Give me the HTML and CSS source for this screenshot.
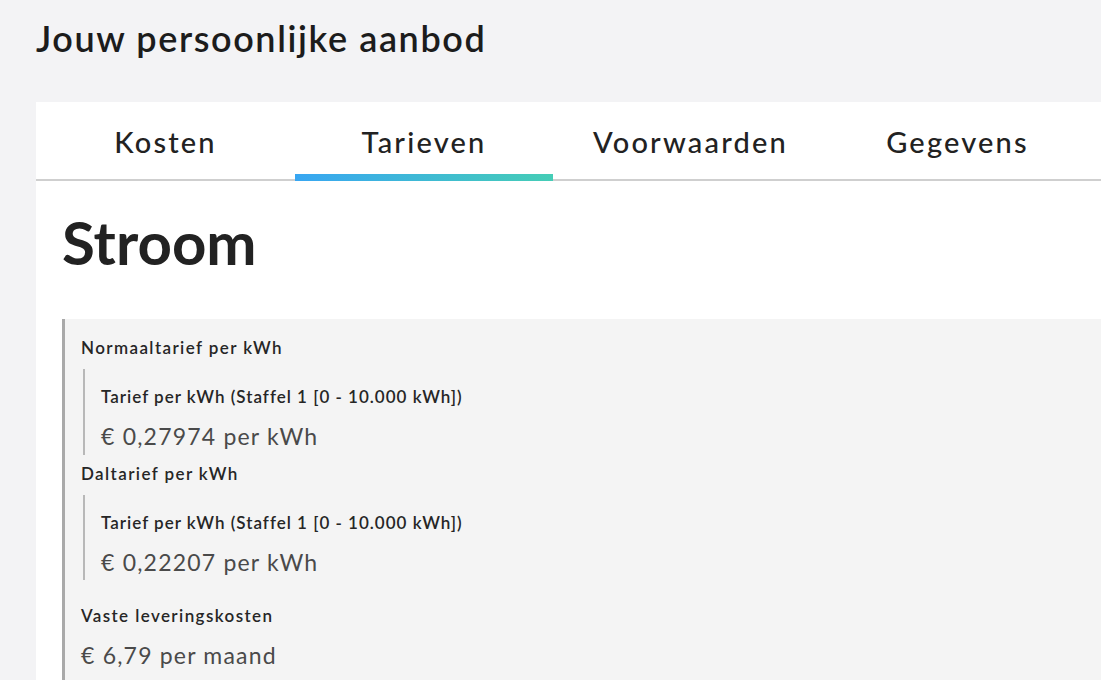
FILE: index.html
```html
<!DOCTYPE html>
<html lang="nl">
  <head>
    <meta charset="UTF-8" />
    <meta name="viewport" content="width=device-width, initial-scale=1.0" />
    <title>Jouw persoonlijke aanbod</title>
    <link rel="stylesheet" href="styles.css">
  </head>
  <body>
    <h1 class="titel">Jouw persoonlijke aanbod</h1>

    <section class="kaart">
      <nav class="tabs">
        <button class="tab tab-kosten">Kosten</button>
        <button class="tab tab-tarieven actief">Tarieven</button>
        <button class="tab tab-voorwaarden">Voorwaarden</button>
        <button class="tab tab-gegevens">Gegevens</button>
      </nav>

      <div class="inhoud">
        <h2 class="product">Stroom</h2>

        <div class="blok">
          <p class="label">Normaaltarief per kWh</p>
          <div class="staffel">
            <p class="label">Tarief per kWh (Staffel 1 [0 - 10.000 kWh])</p>
            <p class="waarde">€ 0,27974 per kWh</p>
          </div>

          <p class="label">Daltarief per kWh</p>
          <div class="staffel">
            <p class="label">Tarief per kWh (Staffel 1 [0 - 10.000 kWh])</p>
            <p class="waarde">€ 0,22207 per kWh</p>
          </div>

          <p class="label los">Vaste leveringskosten</p>
          <p class="waarde">€ 6,79 per maand</p>
        </div>
      </div>
    </section>
  </body>
</html>
```

FILE: styles.css
```css
* {
  margin: 0;
  padding: 0;
  box-sizing: border-box;
}

body {
  background-color: #f3f3f5;
  font-family: Lato, "Open Sans", sans-serif;
  color: #1e1e1e;
  padding-left: 36px;
  overflow: hidden;
}

.titel {
  font-size: 36px;
  font-weight: 600;
  line-height: 40px;
  letter-spacing: 1.6px;
  padding-top: 18px;
  color: #1c1c1c;
}

.kaart {
  background-color: #fff;
  margin-top: 44px;
  min-height: 600px;
}

.tabs {
  display: flex;
  height: 79px;
  border-bottom: 2px solid #cfcfcf;
}

.tab {
  position: relative;
  border: none;
  background: none;
  font-family: inherit;
  font-size: 29px;
  font-weight: 500;
  letter-spacing: 2.2px;
  color: #222;
  padding-top: 2px;
}

.tab-kosten {
  width: 259px;
}
.tab-tarieven {
  width: 258px;
}
.tab-voorwaarden {
  width: 275px;
}
.tab-gegevens {
  width: 259px;
}

.actief::after {
  content: "";
  position: absolute;
  left: 0;
  right: 0;
  bottom: -2px;
  height: 7px;
  background: linear-gradient(to right, #38a6f2, #45cdb6);
}

.inhoud {
  padding: 21px 0 0 26px;
}

.product {
  font-size: 60px;
  font-weight: 700;
  line-height: 80px;
  color: #222;
}

.blok {
  background-color: #f4f4f4;
  border-left: 3px solid #a9a9a9;
  margin-top: 37px;
  padding: 18px 0 0 16px;
  min-height: 400px;
}

.label {
  font-size: 17px;
  font-weight: 600;
  line-height: 22px;
  letter-spacing: 1.4px;
  color: #262626;
}

.staffel .label {
  letter-spacing: 1px;
}

.waarde {
  font-size: 23px;
  line-height: 32px;
  letter-spacing: 1.2px;
  margin-top: 12px;
  color: #4a4a4a;
}

.staffel {
  border-left: 2px solid #b8b8b8;
  margin: 10px 0 8px 2px;
  padding: 17px 0 3px 16px;
}

.staffel + .label + .staffel {
  padding-bottom: 2px;
}

.los {
  margin-top: 25px;
}
```
